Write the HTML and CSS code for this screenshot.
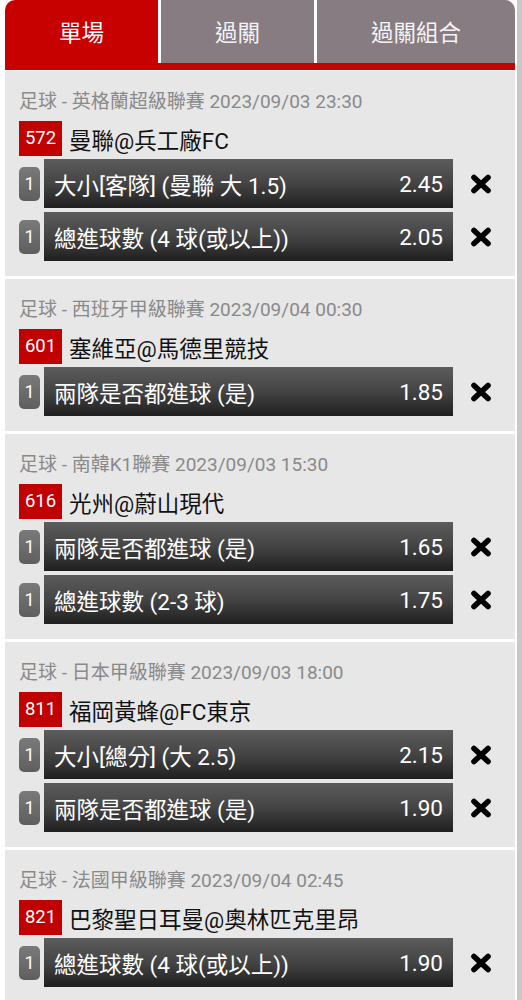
FILE: index.html
```html
<!DOCTYPE html>
<html lang="zh-Hant">
<head>
<meta charset="utf-8">
<title>投注單</title>
<link rel="stylesheet" href="styles.css">
</head>
<body>
<div class="page">
  <main class="main">
    <nav class="tabs">
      <div class="tab tab-active tab-first">單場</div>
      <div class="tab tab-mid">過關</div>
      <div class="tab tab-last">過關組合</div>
    </nav>
    <div class="band"></div>

    <section class="match">
      <div class="league">足球 - 英格蘭超級聯賽 2023/09/03 23:30</div>
      <div class="teams"><span class="num">572</span><span class="name">曼聯@兵工廠FC</span></div>
      <div class="bets">
        <div class="bet"><span class="qty">1</span><div class="bar"><span class="sel">大小[客隊] (曼聯 大 1.5)</span><span class="odds">2.45</span></div><span class="del"><svg viewBox="0 0 22 20" width="22" height="20"><path d="M4 3.5 L18 16.5 M18 3.5 L4 16.5" stroke="#000" stroke-width="5.6" stroke-linecap="round"/></svg></span></div>
        <div class="bet"><span class="qty">1</span><div class="bar"><span class="sel">總進球數 (4 球(或以上))</span><span class="odds">2.05</span></div><span class="del"><svg viewBox="0 0 22 20" width="22" height="20"><path d="M4 3.5 L18 16.5 M18 3.5 L4 16.5" stroke="#000" stroke-width="5.6" stroke-linecap="round"/></svg></span></div>
      </div>
    </section>

    <section class="match">
      <div class="league">足球 - 西班牙甲級聯賽 2023/09/04 00:30</div>
      <div class="teams"><span class="num">601</span><span class="name">塞維亞@馬德里競技</span></div>
      <div class="bets">
        <div class="bet"><span class="qty">1</span><div class="bar"><span class="sel">兩隊是否都進球 (是)</span><span class="odds">1.85</span></div><span class="del"><svg viewBox="0 0 22 20" width="22" height="20"><path d="M4 3.5 L18 16.5 M18 3.5 L4 16.5" stroke="#000" stroke-width="5.6" stroke-linecap="round"/></svg></span></div>
      </div>
    </section>

    <section class="match">
      <div class="league">足球 - 南韓K1聯賽 2023/09/03 15:30</div>
      <div class="teams"><span class="num">616</span><span class="name">光州@蔚山現代</span></div>
      <div class="bets">
        <div class="bet"><span class="qty">1</span><div class="bar"><span class="sel">兩隊是否都進球 (是)</span><span class="odds">1.65</span></div><span class="del"><svg viewBox="0 0 22 20" width="22" height="20"><path d="M4 3.5 L18 16.5 M18 3.5 L4 16.5" stroke="#000" stroke-width="5.6" stroke-linecap="round"/></svg></span></div>
        <div class="bet"><span class="qty">1</span><div class="bar"><span class="sel">總進球數 (2-3 球)</span><span class="odds">1.75</span></div><span class="del"><svg viewBox="0 0 22 20" width="22" height="20"><path d="M4 3.5 L18 16.5 M18 3.5 L4 16.5" stroke="#000" stroke-width="5.6" stroke-linecap="round"/></svg></span></div>
      </div>
    </section>

    <section class="match">
      <div class="league">足球 - 日本甲級聯賽 2023/09/03 18:00</div>
      <div class="teams"><span class="num">811</span><span class="name">福岡黃蜂@FC東京</span></div>
      <div class="bets">
        <div class="bet"><span class="qty">1</span><div class="bar"><span class="sel">大小[總分] (大 2.5)</span><span class="odds">2.15</span></div><span class="del"><svg viewBox="0 0 22 20" width="22" height="20"><path d="M4 3.5 L18 16.5 M18 3.5 L4 16.5" stroke="#000" stroke-width="5.6" stroke-linecap="round"/></svg></span></div>
        <div class="bet"><span class="qty">1</span><div class="bar"><span class="sel">兩隊是否都進球 (是)</span><span class="odds">1.90</span></div><span class="del"><svg viewBox="0 0 22 20" width="22" height="20"><path d="M4 3.5 L18 16.5 M18 3.5 L4 16.5" stroke="#000" stroke-width="5.6" stroke-linecap="round"/></svg></span></div>
      </div>
    </section>

    <section class="match">
      <div class="league">足球 - 法國甲級聯賽 2023/09/04 02:45</div>
      <div class="teams"><span class="num">821</span><span class="name">巴黎聖日耳曼@奧林匹克里昂</span></div>
      <div class="bets">
        <div class="bet"><span class="qty">1</span><div class="bar"><span class="sel">總進球數 (4 球(或以上))</span><span class="odds">1.90</span></div><span class="del"><svg viewBox="0 0 22 20" width="22" height="20"><path d="M4 3.5 L18 16.5 M18 3.5 L4 16.5" stroke="#000" stroke-width="5.6" stroke-linecap="round"/></svg></span></div>
      </div>
    </section>
  </main>
  <div class="scroll"></div>
</div>
</body>
</html>
```
FILE: styles.css
```css
html, body {
  margin: 0;
  padding: 0;
  background: #ffffff;
}
body {
  font-family: Roboto, "Noto Sans CJK TC", "Noto Sans", sans-serif;
  height: 1000px;
  overflow: hidden;
}
.page {
  display: flex;
  align-items: stretch;
  min-height: 1000px;
}
.main {
  width: 510px;
  margin-left: 5px;
  flex: none;
}
.scroll {
  width: 5px;
  margin-left: 2px;
  background: #c8c8c8;
  flex: none;
}
.tabs {
  display: flex;
  gap: 3px;
  height: 63px;
}
.tab {
  display: flex;
  align-items: center;
  justify-content: center;
  background: #877c82;
  color: #f4f4f4;
  font-size: 22.5px;
  padding-bottom: 1px;
  box-sizing: border-box;
}
.tab-first { width: 153px; border-top-left-radius: 10px; }
.tab-mid { width: 153px; }
.tab-last { flex: 1; border-top-right-radius: 10px; }
.tab-active { background: #c70000; color: #ffffff; }
.band {
  height: 7px;
  background: #c70000;
  border-bottom: 1px solid #ffffff;
}
.match {
  background: #e7e7e8;
  padding: 16px 0 15px 14px;
  border-bottom: 3px solid #ffffff;
}
.league {
  font-size: 19px;
  line-height: 30px;
  color: #8a8a8a;
  white-space: nowrap;
}
.teams {
  display: flex;
  align-items: center;
  gap: 7px;
  margin-top: 4px;
  height: 35px;
}
.num {
  background: #c10000;
  color: #ffffff;
  font-size: 18.5px;
  height: 35px;
  line-height: 35px;
  padding: 0 5px;
  min-width: 33px;
  text-align: center;
}
.name {
  font-size: 22.5px;
  color: #111111;
  white-space: nowrap;
}
.bets {
  display: flex;
  flex-direction: column;
  gap: 4px;
  margin-top: 3px;
}
.bet {
  display: flex;
  align-items: center;
}
.qty {
  width: 21px;
  height: 34px;
  border-radius: 5px;
  background: linear-gradient(#7a7a7a, #5e5e5e);
  color: #ffffff;
  font-size: 18px;
  display: flex;
  align-items: center;
  justify-content: center;
  flex: none;
}
.bar {
  width: 409px;
  height: 49px;
  margin-left: 4px;
  box-sizing: border-box;
  padding: 0 10px;
  display: flex;
  align-items: center;
  background: linear-gradient(#5c5c5c 0%, #444444 50%, #1f1f1f 100%);
  color: #ffffff;
  font-size: 22.5px;
  flex: none;
}
.sel {
  white-space: nowrap;
}
.odds {
  margin-left: auto;
}
.del {
  display: flex;
  margin-left: 17px;
}
```
